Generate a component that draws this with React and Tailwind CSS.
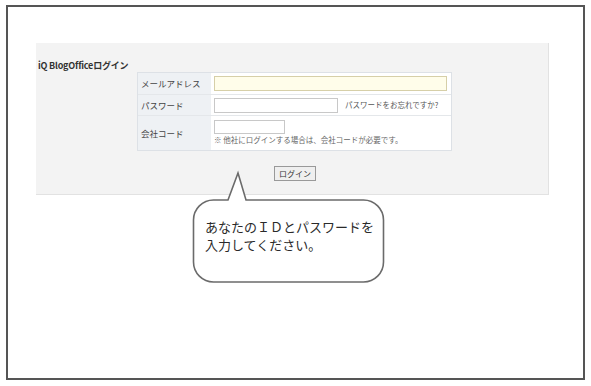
import React from "react";

const jp = { fontFamily: '"Noto Sans CJK JP", "Noto Sans", sans-serif' };

export default function App() {
  return (
    <div className="w-[591px] h-[386px] bg-white pt-[5px] pl-[6px]" style={jp}>
      <div className="relative w-[579px] h-[375px] border-2 border-[#555555] bg-white">
        <div className="ml-[28px] mt-[36px] w-[513px] h-[152px] bg-[#f3f3f3] border-r border-b border-[#e2e2e2] text-[#333]">
          <div className="pt-[17px] pl-[2px] text-[9px] leading-[11px] font-bold text-[#333] tracking-[-0.2px]">
            iQ BlogOfficeログイン
          </div>
          <div className="ml-[101px] mt-[1px] w-[315px] border border-[#dde1e6] bg-white flex flex-col">
            <div className="flex h-[22px] border-b border-[#e4e7ea]">
              <div className="w-[73px] bg-[#eef1f4] flex items-center pl-[3px] text-[8.5px] text-[#444]">メールアドレス</div>
              <div className="flex-1 flex items-center pl-[3px]">
                <div className="w-[233px] h-[15px] bg-[#fffdea] border border-[#d6cfa8]" />
              </div>
            </div>
            <div className="flex h-[21px] border-b border-[#e4e7ea]">
              <div className="w-[73px] bg-[#eef1f4] flex items-center pl-[3px] text-[8.5px] text-[#444]">パスワード</div>
              <div className="flex-1 flex items-center pl-[3px] gap-[7px]">
                <div className="w-[124px] h-[15px] bg-white border border-[#c8c8c8]" />
                <span className="text-[7.5px] text-[#555]">パスワードをお忘れですか?</span>
              </div>
            </div>
            <div className="flex h-[34px]">
              <div className="w-[73px] bg-[#eef1f4] flex items-center pl-[3px] text-[8.5px] text-[#444]">会社コード</div>
              <div className="flex-1 flex flex-col pl-[3px] pt-[4px]">
                <div className="w-[71px] h-[14px] bg-white border border-[#c8c8c8]" />
                <span className="text-[7.5px] leading-[10px] mt-[1px] text-[#666]">※ 他社にログインする場合は、会社コードが必要です。</span>
              </div>
            </div>
          </div>
          <div className="ml-[238px] mt-[15px] w-[42px] h-[15px] border border-[#999] bg-[#efefef] flex items-center justify-center text-[8px] text-[#333]">
            ログイン
          </div>
        </div>

        <svg className="absolute left-[182px] top-[161px]" width="200" height="120" viewBox="0 0 200 120">
          <path
            d="M 23.5 32 H 38 L 48 5 L 56 32 H 173.5 A 20 20 0 0 1 193.5 52 V 94 A 20 20 0 0 1 173.5 114 H 23.5 A 20 20 0 0 1 3.5 94 V 52 A 20 20 0 0 1 23.5 32 Z"
            fill="white"
            stroke="#6b6b6b"
            strokeWidth="1.6"
          />
        </svg>
        <div className="absolute left-[197px] top-[211px] text-[13px] leading-[18px] text-[#2a2a2a]">
          <div>あなたのＩＤとパスワードを</div>
          <div>入力してください。</div>
        </div>
      </div>
    </div>
  );
}
